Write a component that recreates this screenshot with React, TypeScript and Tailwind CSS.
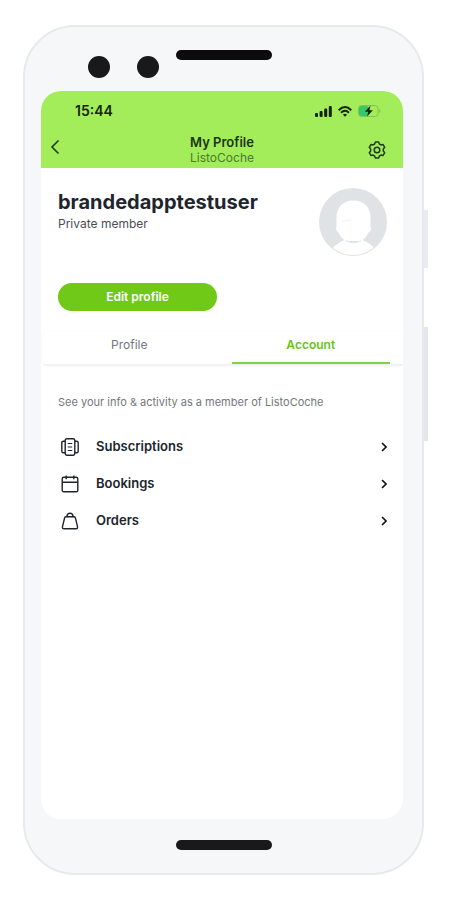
import React from "react";

const ICON = "h-[18px] w-[18px] shrink-0";

const SubscriptionsIcon = () => (
  <svg viewBox="0 0 18 18" className={ICON} fill="none" stroke="currentColor" strokeWidth="1.4" aria-hidden="true">
    <rect x="4.2" y="0.8" width="9.6" height="16.4" rx="1.6" />
    <path d="M4.2 3.2H2.4Q.8 3.2 .8 4.8v8.4q0 1.6 1.6 1.6h1.8M13.8 3.2h1.8q1.6 0 1.6 1.6v8.4q0 1.6-1.6 1.6h-1.8" />
    <path d="M6.8 5.5h4.4M6.8 9h4.4M6.8 12.500h4.4" strokeWidth="1.2" />
  </svg>
);

const BookingsIcon = () => (
  <svg viewBox="0 0 18 18" className={ICON} fill="none" stroke="currentColor" strokeWidth="1.4" aria-hidden="true">
    <rect x="1.2" y="2.2" width="15.6" height="14.600" rx="1.6" />
    <path d="M1.2 7.300h15.600M5.200 .4v3.800M12.800 .4v3.800" />
  </svg>
);

const OrdersIcon = () => (
  <svg viewBox="0 0 18 18" className={ICON} fill="none" stroke="currentColor" strokeWidth="1.4" aria-hidden="true">
    <path d="M4.900 4.800h8.200q1.100 0 1.300 1l2.100 8.800q.5 2.200-1.700 2.200H3.200q-2.200 0-1.700-2.200l2.100-8.800q.2-1 1.300-1z" />
    <path d="M6 5.200V4.200Q6.200 1.200 9 1.200t3 3v1" />
  </svg>
);

const ITEMS = [
  { label: "Subscriptions", icon: SubscriptionsIcon },
  { label: "Bookings", icon: BookingsIcon },
  { label: "Orders", icon: OrdersIcon },
];

const StatusIcons = () => (
  <div className="flex items-center gap-1.5 text-[#14240d]">
    <svg viewBox="0 0 17 11" className="h-[11px] w-[17px]" fill="currentColor" aria-hidden="true">
      <rect x="0" y="7" width="3" height="4" rx="1" />
      <rect x="4.6" y="5" width="3" height="6" rx="1" />
      <rect x="9.2" y="2.6" width="3" height="8.4" rx="1" />
      <rect x="13.8" y="0" width="3" height="11" rx="1" />
    </svg>
    <svg viewBox="0 0 14 11" className="h-[11px] w-[14px]" fill="none" stroke="currentColor" strokeWidth="1.9" aria-hidden="true">
      <path d="M.7 4.2Q7-2 13.3 4.2" />
      <path d="M3 6.7q4-3.7 8 0" />
      <path d="M7 10.8 4.9 8.7q2.1-1.7 4.2 0z" fill="currentColor" stroke="none" />
    </svg>
    <svg viewBox="0 0 23 12" className="h-3 w-[23px]" aria-hidden="true">
      <rect x="0.5" y="0.5" width="19.6" height="11" rx="3" fill="none" stroke="#86c24f" />
      <path d="M21.2 4v4q1.3-.5 1.3-2t-1.3-2z" fill="#86c24f" />
      <rect x="1" y="1" width="9.500" height="10" rx="2" fill="#35c76b" />
      <path d="M12.6.6 6.8 6.8h3.5l-1.200 4.800 5.800-6.400h-3.500z" fill="#10240c" />
    </svg>
  </div>
);

const GearIcon = () => (
  <svg viewBox="0 0 18 18" className={ICON} fill="none" stroke="currentColor" strokeWidth="1.5" strokeLinejoin="round" aria-hidden="true">
    <path d="M7.400 1h3.200l.8 2 1.500.9 2.200-.4 1.600 2.800L15.300 8v2l1.400 1.700-1.600 2.800-2.200-.4-1.500.9-.8 2H7.400l-.8-2-1.500-.9-2.200.4-1.600-2.800L2.700 10V8L1.300 6.300l1.600-2.800 2.200.4 1.500-.9z" />
    <circle cx="9" cy="9" r="2.800" />
  </svg>
);

const Avatar = () => (
  <svg viewBox="0 0 68 68" className="h-[68px] w-[68px] shrink-0" role="img" aria-label="Avatar">
    <defs>
      <clipPath id="avatar-clip">
        <circle cx="34" cy="34" r="33" />
      </clipPath>
    </defs>
    <circle cx="34" cy="34" r="34" fill="#dfe3e6" />
    <g clipPath="url(#avatar-clip)" fill="#fff">
      <path d="M34.500 12.500c10.500 0 17 7 17 16.500v10q2 3-2 5.500-2 5-6.500 8.500H26q-4.500-3.500-6.500-8.500-3.500-2.500-2-5.500V29c0-9.500 6.500-16.500 17-16.500z" />
      <path d="M11 68q2-12 15-16 8.500 5 17 0 13 4 15 16z" />
    </g>
    <path d="M26.500 52.500q8 4.500 16 0" fill="none" stroke="#e3e6e9" />
    <path d="M23.500 33.500q4-1.500 9-1.500" fill="none" stroke="#eef0f2" />
  </svg>
);

const App: React.FC = () => {
  return (
    <main className="flex min-h-screen flex-col bg-white pt-[25px] pb-[25px] pl-[23px] pr-[26px] font-['Inter',sans-serif] text-[#20242c]">
      {/* Phone body */}
      <div className="relative flex grow flex-col rounded-[52px] border-2 border-[#e8e9eb] bg-[#f5f7f9]">
        {/* Side buttons */}
        <div className="absolute -right-1.5 top-[183px] h-[58px] w-1 bg-[#e9ebf0]" />
        <div className="absolute -right-1.5 top-[300px] h-[114px] w-1 bg-[#e4e6ec]" />

        {/* Cameras and speaker */}
        <div className="grid h-16 grid-cols-[1fr_96px_1fr]">
          <div className="flex justify-end gap-[27px] pt-[29px] pr-[17px]">
            <span className="h-[22px] w-[22px] rounded-full bg-[#19191b]" />
            <span className="h-[22px] w-[22px] rounded-full bg-[#19191b]" />
          </div>
          <div className="mt-[23px] h-2.5 rounded-full bg-[#0c0c0e]" />
        </div>

        {/* Screen */}
        <div className="ml-4 mr-[19px] flex grow flex-col overflow-hidden rounded-[20px] bg-white">
          <header className="bg-[#a3ed5a]">
            <div className="flex h-10 items-center justify-between pl-[34px] pr-[22px]">
              <span className="text-sm font-semibold text-[#14240d]">15:44</span>
              <StatusIcons />
            </div>
            <div className="grid h-[37px] grid-cols-[1fr_auto_1fr] items-center">
              <button type="button" aria-label="Back" className="justify-self-start pb-1.5 pl-2 text-[#1d3a1d]">
                <svg viewBox="0 0 12 16" className="h-4 w-3" fill="none" stroke="currentColor" strokeWidth="1.6" aria-hidden="true">
                  <path d="M9.500 1.500 3 8l6.500 6.500" />
                </svg>
              </button>
              <div className="text-center">
                <h1 className="text-[13px] font-semibold leading-4 text-[#1c3313]">My Profile</h1>
                <p className="text-xs leading-4 text-[#4c7a2e]">ListoCoche</p>
              </div>
              <button type="button" aria-label="Settings" className="justify-self-end pr-[17px] text-[#1d3a1d]">
                <GearIcon />
              </button>
            </div>
          </header>

          <section className="flex items-start justify-between pt-5 pl-[17px] pr-4">
            <div>
              <h2 className="text-xl font-bold leading-7">brandedapptestuser</h2>
              <p className="text-xs leading-4 text-[#4a4d54]">Private member</p>
              <button
                type="button"
                className="mt-[51px] block h-7 w-[159px] rounded-full bg-[#70c917] text-xs font-semibold text-white"
              >
                Edit profile
              </button>
            </div>
            <Avatar />
          </section>

          <div role="tablist" className="ml-0.5 mt-5 flex gap-[23px] border-b border-[#f0f0f0] pl-[7px] pr-[13px] shadow-sm shadow-black/5">
            <button type="button" role="tab" aria-selected="false" className="h-[33px] flex-1 pb-1.5 text-xs text-[#74777c]">
              Profile
            </button>
            <button
              type="button"
              role="tab"
              aria-selected="true"
              className="h-[33px] flex-1 border-b-2 border-[#7fd04a] pb-1 text-xs font-semibold text-[#65c418]"
            >
              Account
            </button>
          </div>

          <p className="mt-[29px] pl-[17px] text-[11px] leading-4 text-[#74777c]">
            See your info &amp; activity as a member of ListoCoche
          </p>

          <ul className="mt-[18px]">
            {ITEMS.map(({ label, icon: Icon }) => (
              <li key={label}>
                <a href="#" className="flex h-[37px] items-center gap-[17px] pl-5 pr-4">
                  <Icon />
                  <span className="grow text-[13px] font-semibold">{label}</span>
                  <svg viewBox="0 0 6 10" className="h-2.5 w-1.5" fill="none" stroke="#111" strokeWidth="1.6" aria-hidden="true">
                    <path d="M1 1l4 4-4 4" />
                  </svg>
                </a>
              </li>
            ))}
          </ul>
        </div>

        {/* Home bar */}
        <div className="mx-auto mt-[21px] mb-[23px] h-2.5 w-24 rounded-full bg-[#19191b]" />
      </div>
    </main>
  );
};

export default App;
